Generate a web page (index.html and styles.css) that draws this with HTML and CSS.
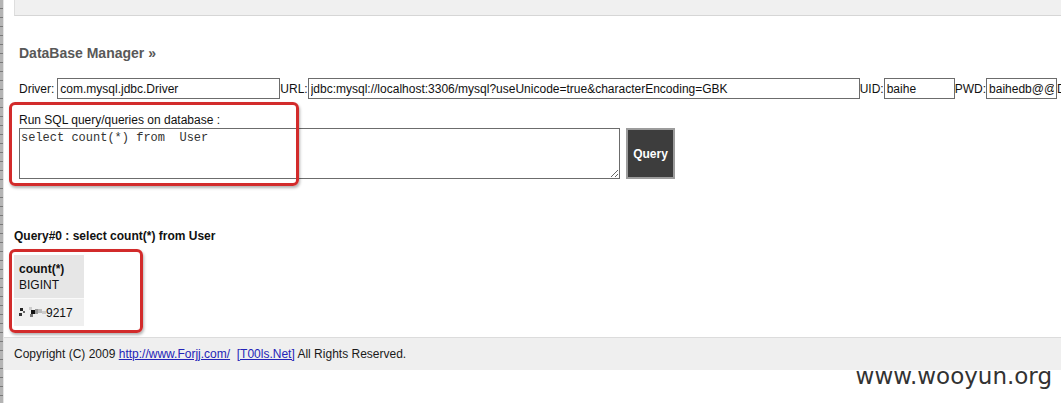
FILE: index.html
```html
<!DOCTYPE html>
<html>
<head>
<meta charset="utf-8">
<title>DataBase Manager</title>
<link rel="stylesheet" href="styles.css">
</head>
<body>
<div class="page">
  <div class="ruler"></div>
  <div class="main">
    <div class="topbar"></div>
    <div class="form">
      <h2 class="title">DataBase Manager &raquo;</h2>
      <div class="conn">
        <span class="lbl lbl-driver">Driver:</span><input class="inp inp-driver" value="com.mysql.jdbc.Driver"><span class="lbl">URL:</span><input class="inp inp-url" value="jdbc:mysql://localhost:3306/mysql?useUnicode=true&amp;characterEncoding=GBK"><span class="lbl">UID:</span><input class="inp inp-short" value="baihe"><span class="lbl">PWD:</span><input class="inp inp-short" value="baihedb@@"><span class="lbl">DB</span>
      </div>
      <div class="sql-label">Run SQL query/queries on database :</div>
      <div class="sql-row">
        <textarea class="sql">select count(*) from  User</textarea>
        <button class="btn">Query</button>
      </div>
    </div>
    <div class="result">
      <div class="qtitle">Query#0 : select count(*) from User</div>
      <table class="grid">
        <tr><th><b>count(*)</b><br>BIGINT</th></tr>
        <tr><td><svg class="redact" width="27" height="12" viewBox="0 0 27 12"><rect x="1" y="2" width="3" height="3" fill="#222"/><rect x="4" y="5" width="2" height="2" fill="#666"/><rect x="0" y="7" width="3" height="3" fill="#333"/><rect x="10" y="1" width="3" height="3" fill="#ccc"/><rect x="12" y="4" width="4" height="4" fill="#111"/><rect x="11" y="8" width="3" height="3" fill="#777"/><rect x="16" y="3" width="3" height="5" fill="#999"/><rect x="19" y="3" width="4" height="4" fill="#bbb"/><rect x="23" y="5" width="4" height="3" fill="#ccc"/></svg>9217</td></tr>
      </table>
    </div>
    <div class="footer">Copyright (C) 2009 <a href="#">http://www.Forjj.com/</a>&nbsp; <a href="#">[T00ls.Net]</a> All Rights Reserved.</div>
  </div>
  <div class="mark mark-sql"></div>
  <div class="mark mark-result"></div>
  <div class="watermark">www.wooyun.org</div>
</div>
</body>
</html>
```
FILE: styles.css
```css
html, body {
  margin: 0;
  padding: 0;
  background: #fff;
  overflow: hidden;
}
body {
  font-family: "Liberation Sans", Arial, sans-serif;
  font-size: 12px;
  color: #111;
}
.page {
  position: relative;
  display: flex;
  width: 1061px;
  height: 403px;
  overflow: hidden;
}
.ruler {
  width: 4px;
  flex: none;
  background: repeating-linear-gradient(to bottom, #b4b4b4 0, #b4b4b4 8px, #7a7a7a 8px, #7a7a7a 9px);
  border-right: 1px solid #e4e4e4;
  box-sizing: border-box;
}
.main {
  flex: 1;
  min-width: 0;
}
.topbar {
  margin-left: 10px;
  height: 15px;
  background: #f0f0f0;
  border-left: 1px solid #dedede;
  border-bottom: 1px solid #d6d6d6;
}
.form {
  padding-left: 15px;
}
.title {
  margin: 29px 0 0;
  font-size: 14px;
  line-height: 16px;
  font-weight: bold;
  color: #585858;
}
.conn {
  margin-top: 17px;
  display: flex;
  align-items: center;
  white-space: nowrap;
  height: 21px;
  font-size: 12px;
  overflow: hidden;
}
.lbl {
  flex: none;
}
.lbl-driver {
  margin-right: 3px;
}
.inp {
  flex: none;
  box-sizing: border-box;
  height: 21px;
  border: 1px solid #6c6c6c;
  padding: 0 2px;
  margin: 0;
  font-family: "Liberation Sans", Arial, sans-serif;
  font-size: 12px;
  color: #111;
  background: #fff;
  outline: none;
}
.inp-driver { width: 223px; }
.inp-url { width: 552px; }
.inp-short { width: 71px; }
.sql-label {
  margin-top: 14px;
  line-height: 14px;
}
.sql-row {
  margin-top: 1px;
  display: flex;
  align-items: flex-start;
  gap: 6px;
}
.sql {
  box-sizing: border-box;
  width: 601px;
  height: 51px;
  margin: 0;
  border: 1px solid #6c6c6c;
  padding: 2px 1px 1px;
  font-family: "Liberation Mono", "Courier New", monospace;
  font-size: 12px;
  color: #333;
  background: #fff;
  outline: none;
}
.btn {
  box-sizing: border-box;
  width: 49px;
  height: 51px;
  margin: 0;
  padding: 0;
  background: #3d3d3d;
  border: 2px solid #9c9c9c;
  color: #fff;
  font-family: "Liberation Sans", Arial, sans-serif;
  font-size: 12px;
  font-weight: bold;
}
.result {
  padding-left: 10px;
}
.qtitle {
  margin-top: 50px;
  line-height: 14px;
  font-weight: bold;
}
.grid {
  margin-top: 12px;
  border-collapse: collapse;
  border-spacing: 0;
}
.grid th {
  width: 60px;
  padding: 6px 5px 5px;
  line-height: 16px;
  text-align: left;
  font-weight: normal;
  background: #e6e6e6;
  border-bottom: 1px solid #fafafa;
}
.grid td {
  padding: 6px 5px 5px;
  line-height: 16px;
  background: #efefef;
}
.redact {
  vertical-align: -1px;
}
.footer {
  margin-top: 11px;
  border-top: 1px solid #dcdcdc;
  background: #efefef;
  padding: 9px 10px;
  line-height: 14px;
  color: #1a1a1a;
  white-space: nowrap;
}
.footer a {
  color: #2424b8;
  text-decoration: underline;
}
.mark {
  position: absolute;
  box-sizing: border-box;
  border: 3px solid #d22b2b;
  border-radius: 6px;
  box-shadow: 1px 2px 3px rgba(0, 0, 0, 0.3);
  pointer-events: none;
}
.mark-sql {
  left: 9px;
  top: 102px;
  width: 290px;
  height: 84px;
}
.mark-result {
  left: 9px;
  top: 249px;
  width: 134px;
  height: 84px;
}
.watermark {
  position: absolute;
  right: 9px;
  top: 363px;
  font-family: "DejaVu Sans", sans-serif;
  font-size: 23px;
  line-height: 27px;
  color: #333;
}
```
